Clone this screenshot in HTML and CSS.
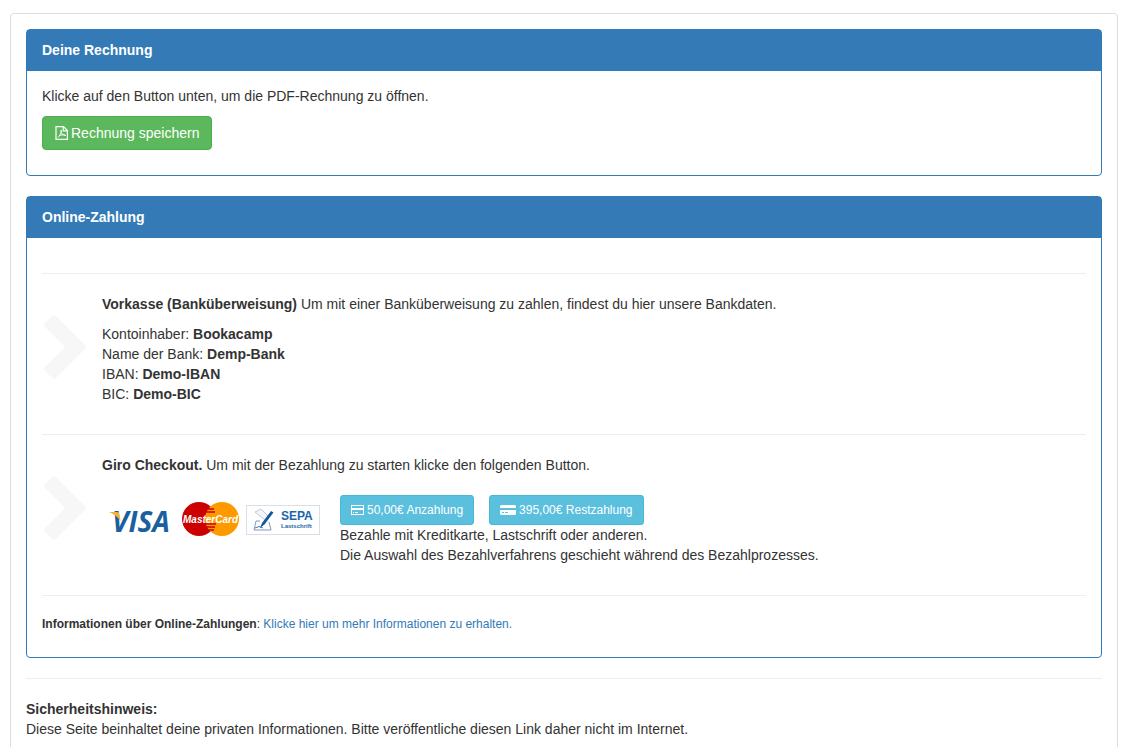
FILE: index.html
```html
<!DOCTYPE html>
<html lang="de">
<head>
    <meta charset="UTF-8">
    <meta name="viewport" content="width=device-width, initial-scale=1.0">
    <title>Rechnung und Zahlung</title>
    <link rel="stylesheet" href="styles.css">
</head>
<body>
    <main class="well">
        <section class="panel">
            <h3 class="panel-heading">Deine Rechnung</h3>
            <div class="panel-body">
                <p>Klicke auf den Button unten, um die PDF-Rechnung zu öffnen.</p>
                <p>
                    <button type="button" class="btn btn-success">
                        <svg class="icon-pdf" viewBox="0 0 13 14" aria-hidden="true">
                            <path d="M1 .6h7.500l3.900 3.900v8.900H1zM8.200.6v4.200h4.200" fill="none" stroke="#fff" stroke-width="1.200"/>
                            <path d="M6 4c1.200 0 .3 4-3 7.500M6 4c-.8 2 1 4.800 4.700 5.500M4 9.800c2-1 4-1.300 6.700-.5" fill="none" stroke="#fff"/>
                        </svg>
                        Rechnung speichern
                    </button>
                </p>
            </div>
        </section>

        <section class="panel">
            <h3 class="panel-heading">Online-Zahlung</h3>
            <div class="panel-body">
                <hr>
                <div class="method">
                    <svg class="chevron" viewBox="0 0 42 64" aria-hidden="true">
                        <path d="M1 8 8 1q2-2 4 0l29 29q2 2 0 4L12 63q-2 2-4 0L1 56q-2-2 0-4L21 32 1 12q-2-2 0-4z"/>
                    </svg>
                    <div class="method-text">
                        <p><strong>Vorkasse (Banküberweisung)</strong> Um mit einer Banküberweisung zu zahlen, findest du hier unsere Bankdaten.</p>
                        <p>
                            Kontoinhaber: <strong>Bookacamp</strong><br>
                            Name der Bank: <strong>Demp-Bank</strong><br>
                            IBAN: <strong>Demo-IBAN</strong><br>
                            BIC: <strong>Demo-BIC</strong>
                        </p>
                    </div>
                </div>
                <hr>
                <div class="method">
                    <svg class="chevron" viewBox="0 0 42 64" aria-hidden="true">
                        <path d="M1 8 8 1q2-2 4 0l29 29q2 2 0 4L12 63q-2 2-4 0L1 56q-2-2 0-4L21 32 1 12q-2-2 0-4z"/>
                    </svg>
                    <div class="method-text">
                        <p><strong>Giro Checkout.</strong> Um mit der Bezahlung zu starten klicke den folgenden Button.</p>
                        <div class="checkout">
                            <svg class="logos" viewBox="0 0 220 48" role="img" aria-label="Visa, MasterCard, SEPA Lastschrift">
                                <text x="10" y="37" class="visa">VISA</text>
                                <path d="M7 17h8q2 0 2.500 2l1 7q-4-6-11.500-9z" fill="#f3b33e"/>
                                <circle cx="97" cy="24" r="17" fill="#cc0000"/>
                                <circle cx="120" cy="24" r="17" fill="#ff9900"/>
                                <path d="M104 14h8M103 17h10M103 29h11M103 32h10M105 35h7" stroke="#cc0000" stroke-width="1.300"/>
                                <text x="81" y="28" class="mastercard">MasterCard</text>
                                <rect x="144.500" y="10.500" width="73" height="29" fill="#fff" stroke="#dcdfe3"/>
                                <path d="M158 26h-4l-2 9h17l-2-8" fill="none" stroke="#7d9cbc"/>
                                <path d="m153 17 6-3 8 8-4 3z" fill="#f3f5f7" stroke="#b3bdc8" stroke-width=".8"/>
                                <path d="m158 33 2-5 9-12 2.500 1.500-9 12z" fill="#145a9c"/>
                                <path d="M153 33q4-3 8 0" fill="none" stroke="#145a9c" stroke-width=".8"/>
                                <text x="179" y="25" class="sepa">SEPA</text>
                                <text x="179" y="33" class="sepa-small">Lastschrift</text>
                            </svg>
                            <div>
                                <div class="buttons">
                                    <button type="button" class="btn btn-info">
                                        <svg class="icon-card" viewBox="0 0 13 12" aria-hidden="true">
                                            <rect x=".5" y="1.500" width="12" height="9" fill="none" stroke="#fff"/>
                                            <path d="M0 4h13v2H0zM2 8h1v1H2zM4 8h3v1H4z" fill="#fff"/>
                                        </svg>
                                        50,00€ Anzahlung
                                    </button>
                                    <button type="button" class="btn btn-info">
                                        <svg class="icon-card-wide" viewBox="0 0 16 12" aria-hidden="true">
                                            <path d="M1 1h14l1 1v2H0V2zM0 6h16v4l-1 1H1l-1-1z" fill="#fff"/>
                                            <path d="M2 8.500h2M5 8.500h3" stroke="#5bc0de"/>
                                        </svg>
                                        395,00€ Restzahlung
                                    </button>
                                </div>
                                <p>Bezahle mit Kreditkarte, Lastschrift oder anderen.<br>Die Auswahl des Bezahlverfahrens geschieht während des Bezahlprozesses.</p>
                            </div>
                        </div>
                    </div>
                </div>
                <hr>
                <p class="small"><strong>Informationen über Online-Zahlungen</strong>: <a href="#">Klicke hier um mehr Informationen zu erhalten.</a></p>
            </div>
        </section>

        <hr>
        <p><strong>Sicherheitshinweis:</strong><br>Diese Seite beinhaltet deine privaten Informationen. Bitte veröffentliche diesen Link daher nicht im Internet.</p>
    </main>
</body>
</html>
```
FILE: styles.css
```css
* {
    box-sizing: border-box;
}
body {
    margin: 13px 13px 0 10px;
    font-family: "Liberation Sans", Arial, sans-serif;
    font-size: 14px;
    line-height: 20px;
    color: #333;
    background-color: #fff;
    overflow: hidden;
}
p {
    margin: 0 0 10px;
}
hr {
    margin: 20px 0;
    border: 0;
    border-top: 1px solid #eee;
}
a {
    color: #337ab7;
    text-decoration: none;
}
.well {
    padding: 15px;
    border: 1px solid #ddd;
    border-radius: 4px;
}
.panel {
    margin-bottom: 20px;
    border: 1px solid #337ab7;
    border-radius: 4px;
}
.panel-heading {
    margin: 0;
    padding: 10px 15px;
    font-size: 14px;
    font-weight: bold;
    color: #fff;
    background-color: #337ab7;
    border-bottom: 1px solid #337ab7;
}
.panel-body {
    display: flow-root;
    padding: 15px;
}
.btn {
    display: inline-flex;
    align-items: center;
    gap: 3px;
    border: 1px solid;
    font-family: inherit;
    color: #fff;
    cursor: pointer;
}
.btn-success {
    padding: 6px 12px;
    font-size: 14px;
    line-height: 20px;
    background-color: #5cb85c;
    border-color: #4cae4c;
    border-radius: 4px;
}
.btn-info {
    padding: 5px 10px;
    font-size: 12px;
    line-height: 18px;
    background-color: #5bc0de;
    border-color: #46b8da;
    border-radius: 3px;
}
.icon-pdf {
    width: 13px;
    height: 14px;
}
.icon-card {
    width: 13px;
    height: 12px;
}
.icon-card-wide {
    width: 16px;
    height: 12px;
}
.method {
    display: flex;
    align-items: flex-start;
}
.chevron {
    flex: none;
    width: 42px;
    height: 64px;
    margin: 21px 16px 0 2px;
    fill: #f7f7f7;
}
.method-text {
    flex: 1;
}
.checkout {
    display: flex;
    align-items: flex-start;
    gap: 18px;
    padding-top: 10px;
}
.logos {
    flex: none;
    width: 220px;
    height: 48px;
}
.buttons {
    display: flex;
    gap: 15px;
}
.visa {
    font: italic bold 28px "Open Sans", sans-serif;
    fill: #1a5fa0;
}
.mastercard {
    font: italic bold 10px "Liberation Sans", Arial, sans-serif;
    fill: #fff;
}
.sepa {
    font: bold 12px "Liberation Sans", Arial, sans-serif;
    fill: #1b66a8;
}
.sepa-small {
    font: bold 6px "Liberation Sans", Arial, sans-serif;
    fill: #1b66a8;
}
.small {
    font-size: 12px;
    line-height: 16px;
}
```
